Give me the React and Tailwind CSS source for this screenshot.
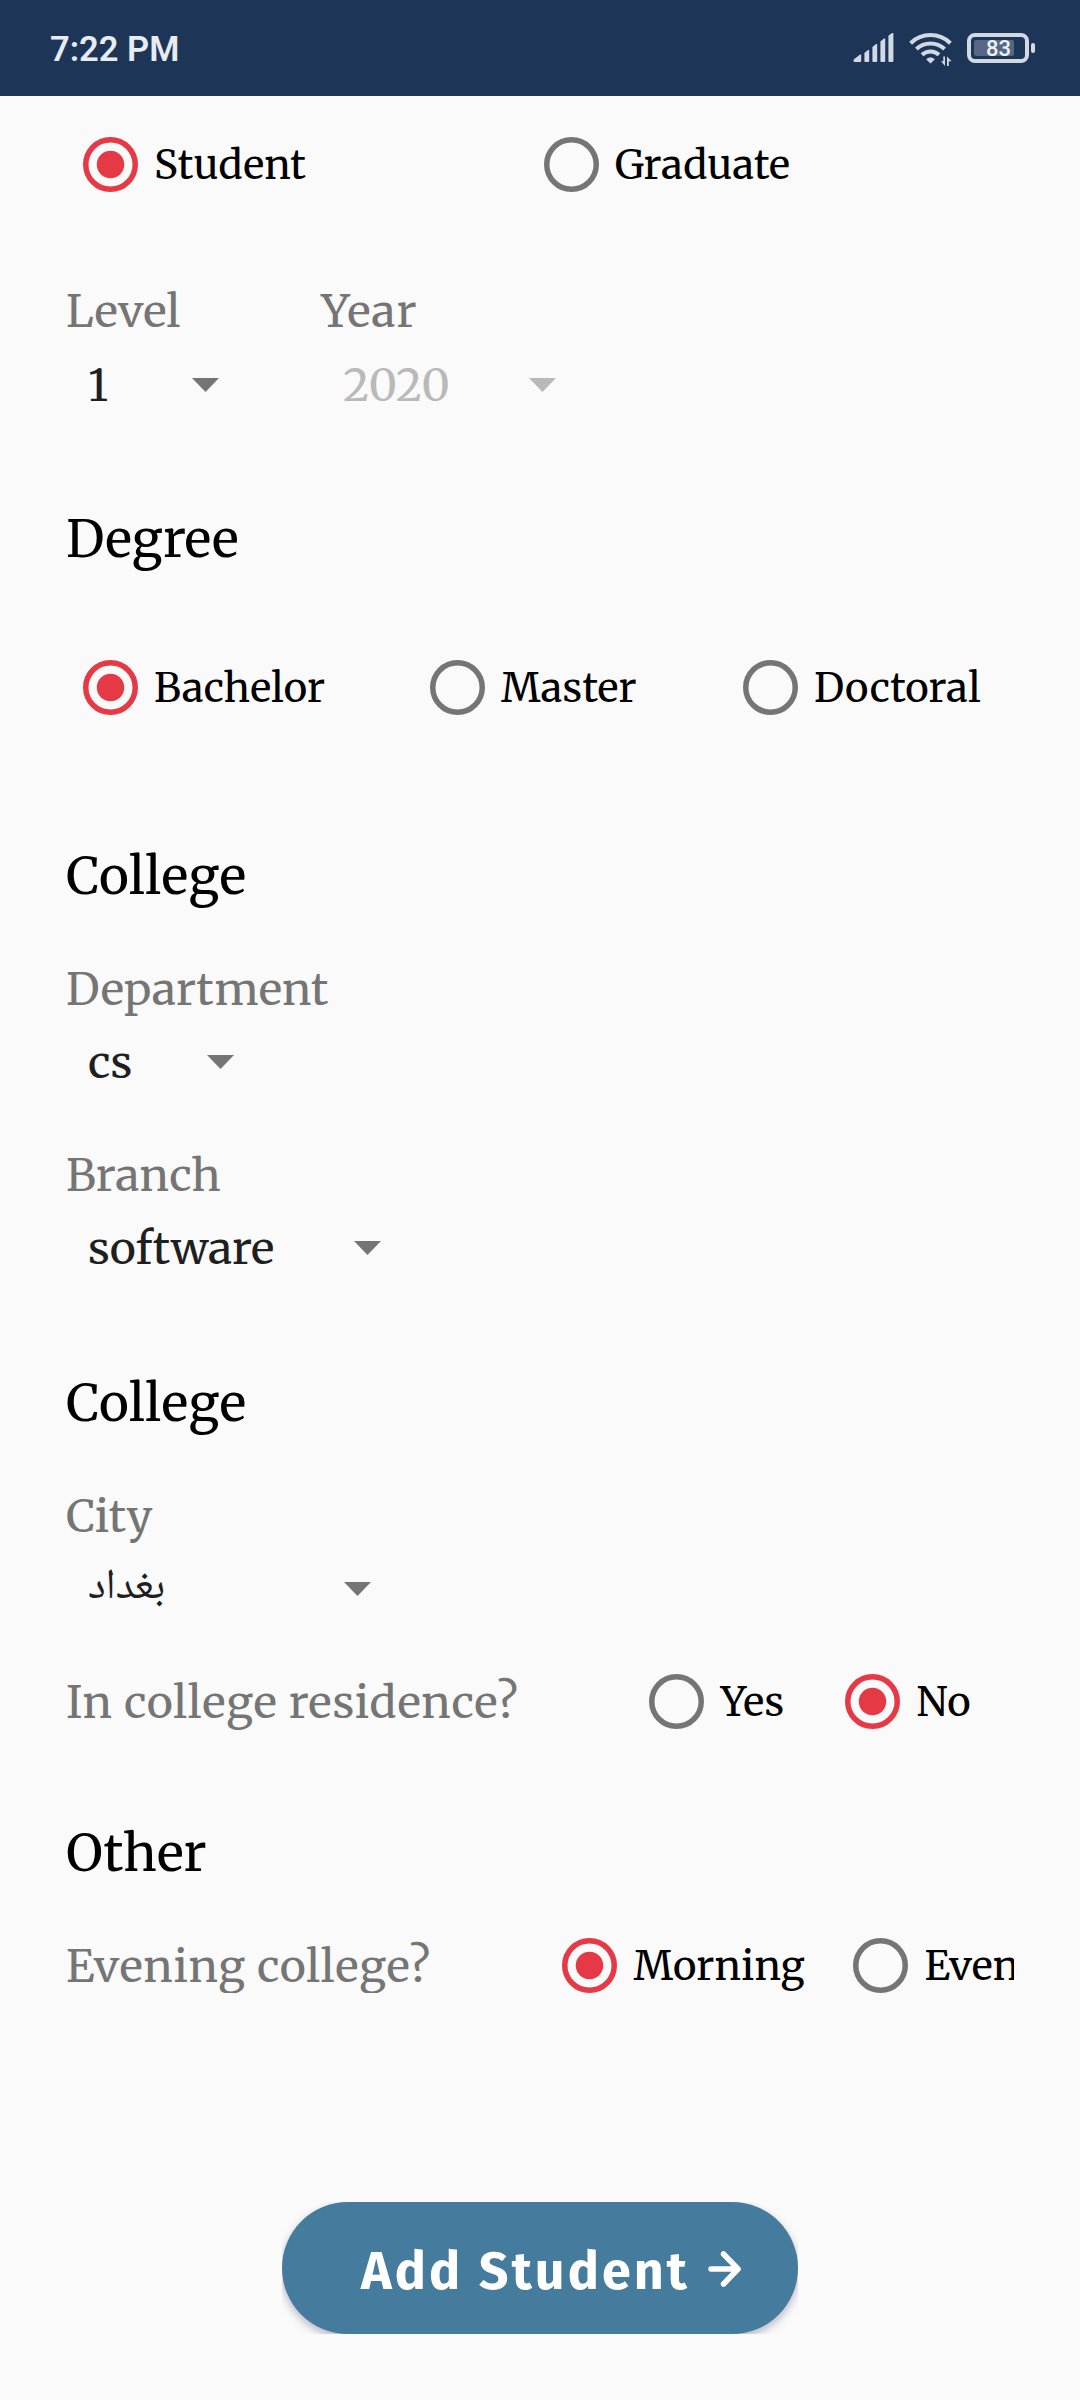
import React from "react";

function SignalIcon() {
  return (
    <svg width="42" height="30" viewBox="0 0 42 30" fill="#d2d9e3">
      <path d="M1.5 29 Q.6 29 .6 28 V26.6 L7.2 21.6 H8.2 V28 Q8.2 29 7.2 29Z" />
      <path d="M11.4 20 L15 17 H16.2 V28 Q16.2 29 15.2 29 H12.4 Q11.4 29 11.4 28Z" />
      <path d="M19.4 14 L23 11 H24.2 V28 Q24.2 29 23.2 29 H20.4 Q19.4 29 19.4 28Z" />
      <path d="M27.4 8.4 L31 5.4 H32.2 V28 Q32.2 29 31.2 29 H28.4 Q27.4 29 27.4 28Z" />
      <path d="M35.4 2.8 L39 0 H40.4 V28 Q40.4 29 39.4 29 H36.4 Q35.4 29 35.4 28Z" />
    </svg>
  );
}

function WifiIcon() {
  return (
    <svg width="44" height="34" viewBox="0 0 44 34" fill="none" stroke="#d2d9e3" strokeWidth="4">
      <path d="M1.6 10.2 C12.6 -.6 30.4 -.6 41.4 10.2" />
      <path d="M7.4 16 C15.2 8.6 27.8 8.6 35.6 16" />
      <path d="M13 21.8 C17.8 17.4 25.2 17.4 30 21.8" />
      <path d="M17.3 26.4 C19.6 24 23.4 24 25.7 26.4 L21.5 30.4Z" fill="#d2d9e3" stroke="none" />
      <path d="M36 23.5 V33 L32 28.3 H34.3 V23.5Z M38 33 V23.5 L42.6 28.2 H39.8 V33Z" fill="#d2d9e3" stroke="none" />
    </svg>
  );
}

function Battery({ level }) {
  return (
    <div className="flex items-center gap-0.5">
      <div className="flex h-[30px] w-[62px] items-center rounded-[8px] border-4 border-[#d2d9e3] pl-[3px]">
        <div className="flex h-4 w-10 items-center justify-end rounded-[2px] bg-[#566883]">
          <span className="pt-0.5 pr-[3px] font-['Roboto',sans-serif] text-[22px] leading-4 font-medium text-[#eef1f5]">{level}</span>
        </div>
      </div>
      <div className="h-[10px] w-1 rounded-full bg-[#d2d9e3]" />
    </div>
  );
}

function StatusBar() {
  return (
    <header className="flex h-24 items-center justify-between bg-[#1d3557] pr-[45px] pl-[50px]">
      <time className="pt-0.5 font-['Roboto',sans-serif] text-[34.5px] leading-none font-semibold text-[#e8ebf0]">7:22 PM</time>
      <div className="flex items-center">
        <SignalIcon />
        <div className="mt-1 ml-[14px]"><WifiIcon /></div>
        <div className="ml-[14px]"><Battery level={83} /></div>
      </div>
    </header>
  );
}

function Radio({ label, checked = false }) {
  return (
    <div role="radio" aria-checked={checked} className="flex h-14 items-center gap-[16.5px] whitespace-nowrap">
      <svg className={"shrink-0 " + (checked ? "text-[#e63946]" : "text-[#757575]")} width="55" height="55" viewBox="0 0 55 55">
        <circle cx="27.5" cy="27.5" r="24.75" fill="none" stroke="currentColor" strokeWidth="5.5" />
        {checked && <circle cx="27.5" cy="27.5" r="13.75" fill="currentColor" />}
      </svg>
      <span className="pt-0.5 text-[40px] leading-[58px] tracking-[0.2px] text-black">{label}</span>
    </div>
  );
}

function Spinner({ children, className, disabled = false }) {
  return (
    <div className={"flex h-14 items-center justify-between pl-[22px] text-[44.5px] leading-[58px] " + (disabled ? "text-[#b9b9b9] " : "text-[#1f1f1f] ") + className}>
      <span className="pt-px">{children}</span>
      <svg className="mt-px" width="27" height="14" viewBox="0 0 27 14" fill={disabled ? "#b9b9b9" : "#757575"}>
        <path d="M0 0H27L13.5 14Z" />
      </svg>
    </div>
  );
}

function Heading({ children, className = "" }) {
  return <h2 className={"text-[51px] leading-16 text-black " + className}>{children}</h2>;
}

function Label({ children, className = "tracking-[0.2px]" }) {
  return <div className={"h-14 text-[44.5px] leading-14 whitespace-nowrap text-[#757575] " + className}>{children}</div>;
}

export default function App() {
  return (
    <div className="h-[2400px] w-[1080px] overflow-hidden bg-[#fafafa] font-['Merriweather','DejaVu_Serif_Condensed','DejaVu_Serif',serif] font-normal">
      <StatusBar />
      <main className="flex flex-col px-[66px] pt-10">
        <div role="radiogroup" className="grid grid-cols-[461px_1fr] pl-[16.5px]">
          <Radio label="Student" checked />
          <Radio label="Graduate" />
        </div>

        <div className="mt-[91px] grid grid-cols-[255px_1fr]">
          <div className="flex flex-col gap-[17px]">
            <Label>Level</Label>
            <Spinner className="w-[153px]">1</Spinner>
          </div>
          <div className="flex flex-col gap-[17px]">
            <Label className="tracking-[1.2px]">Year</Label>
            <Spinner className="w-[235px]" disabled>2020</Spinner>
          </div>
        </div>

        <Heading className="mt-[95px] tracking-[-0.2px]">Degree</Heading>
        <div role="radiogroup" className="mt-[88px] grid grid-cols-[347px_313px_1fr] pl-[16.5px]">
          <Radio label="Bachelor" checked />
          <Radio label="Master" />
          <Radio label="Doctoral" />
        </div>

        <Heading className="mt-[129px] tracking-[0.45px]">College</Heading>
        <div className="mt-[53px] flex flex-col gap-4">
          <Label>Department</Label>
          <Spinner className="w-[168px]">cs</Spinner>
        </div>
        <div className="mt-[58px] flex flex-col gap-4">
          <Label>Branch</Label>
          <Spinner className="w-[315px]">software</Spinner>
        </div>

        <Heading className="mt-24 tracking-[0.45px]">College</Heading>
        <div className="mt-[53px] flex flex-col gap-[17px]">
          <Label>City</Label>
          <div className="flex h-14 w-[305px] items-center justify-between pl-[22px] text-[#1f1f1f]">
            <span className="font-['Noto_Naskh_Arabic','DejaVu_Sans',sans-serif] text-[42.5px] leading-11" lang="ar">بغداد</span>
            <svg width="27" height="14" viewBox="0 0 27 14" fill="#757575">
              <path d="M0 0H27L13.5 14Z" />
            </svg>
          </div>
        </div>
        <div className="mt-14 grid grid-cols-[583px_196px_1fr]">
          <Label className="leading-[58px] tracking-[0.7px]">In college residence?</Label>
          <Radio label="Yes" />
          <Radio label="No" checked />
        </div>

        <Heading className="mt-[92px]">Other</Heading>
        <div className="mt-[52px] grid grid-cols-[496px_291px_161px] overflow-hidden">
          <Label className="leading-[58px] tracking-[0.7px]">Evening college?</Label>
          <Radio label="Morning" checked />
          <Radio label="Evening" />
        </div>

        <div className="mt-[209px] h-[132px] w-[516px] self-center overflow-hidden">
          <button className="flex h-full w-full items-center rounded-full bg-[#457b9d] pl-[79px] shadow-[0_4px_8px_rgba(20,30,80,0.3)]">
            <span className="pt-2 font-['Fira_Sans','Open_Sans',sans-serif] text-[52px] leading-none font-bold tracking-[3.1px] whitespace-nowrap text-white">Add Student</span>
            <svg className="mt-0.5 ml-[18px]" width="34" height="36" viewBox="0 0 34 36" fill="none" stroke="#fff" strokeWidth="5.5" strokeLinecap="round" strokeLinejoin="round">
              <path d="M3 18H30M15.5 3L30 18L15.5 33" />
            </svg>
          </button>
        </div>
      </main>
    </div>
  );
}
